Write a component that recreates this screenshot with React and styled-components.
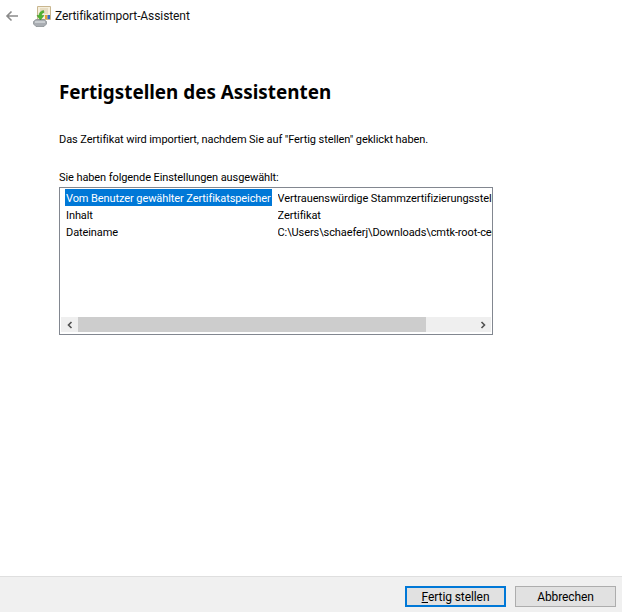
import React from "react";
import styled, { createGlobalStyle } from "styled-components";

const Global = createGlobalStyle`
  html, body { margin: 0; padding: 0; background: #fff; }
  * { box-sizing: border-box; }
`;
const Page = styled.div`
  width: 622px; height: 612px; display: flex; flex-direction: column; overflow: hidden;
  font-family: Roboto, "Noto Sans", sans-serif; font-size: 11px; letter-spacing: -0.09px; color: #000; background: #fff;
`;
const Header = styled.header`
  height: 32px; display: flex; align-items: center; padding-left: 5px; flex: none;
`;
const BackIcon = styled.svg`width: 14px; height: 12px; flex: none; margin-bottom: 1px;`;
const AppIcon = styled.svg`width: 18px; height: 21px; margin-left: 14px; flex: none; margin-bottom: -1px;`;
const WindowTitle = styled.span`margin-left: 4px; color: #111; font-size: 12px;`;
const Content = styled.main`
  flex: 1; padding: 46px 0 0 59px; display: flex; flex-direction: column; align-items: flex-start;
`;
const Heading = styled.h1`
  margin: 0; font-family: "Noto Sans", sans-serif; font-size: 18.85px; letter-spacing: 0; line-height: 28px; font-weight: 700;
`;
const Text = styled.p`
  margin: ${p => p.$top}px 0 0 0; line-height: 16px; height: 16px; white-space: nowrap;
`;
const ListBox = styled.div`
  width: 434px; height: 148px; margin-top: 1px; border: 1px solid #828790; display: flex; flex-direction: column; padding: 1px 0 0 0;
`;
const Rows = styled.div`flex: 1; overflow: hidden;`;
const Row = styled.div`
  display: grid; grid-template-columns: 217.5px 1fr; height: 17px; line-height: 19px; white-space: nowrap; overflow: hidden;
`;
const Name = styled.div`
  margin-left: 5px; padding-left: 1px; background: ${p => p.$selected ? "#0078d7" : "transparent"};
  color: ${p => p.$selected ? "#fff" : "#000"}; width: 207px; overflow: hidden;
`;
const Value = styled.div`overflow: hidden;`;
const Scrollbar = styled.div`
  height: 15px; margin: 0 1px 2px 1px; background: #efefef; display: flex; align-items: stretch; flex: none;
`;
const ScrollButton = styled.div`
  width: 17px; display: flex; align-items: center; justify-content: center; flex: none;
`;
const Thumb = styled.div`width: 348px; background: #cdcdcd;`;
const Track = styled.div`flex: 1;`;
const Chevron = styled.svg`width: 8px; height: 8px;`;
const Footer = styled.footer`
  height: 36px; flex: none; background: #f0f0f0; border-top: 1px solid #dfdfdf;
  display: flex; justify-content: flex-end; align-items: flex-start; gap: 9px; padding: 9px 6px 0 0;
`;
const Button = styled.button`
  width: 101px; height: 21px; padding: 0; background: #e1e1e1; color: #000;
  font: inherit; letter-spacing: inherit; font-size: 12px; line-height: 16px;
  border: ${p => p.$primary ? "2px solid #0078d7" : "1px solid #adadad"};
`;

export default function App() {
  return (
    <Page>
      <Global />
      <Header>
        <BackIcon viewBox="0 0 14 12">
          <path d="M13 6H2.5M6.5 1.5 2 6l4.5 4.5" fill="none" stroke="#8a8a8a" strokeWidth="1.6" />
        </BackIcon>
        <AppIcon viewBox="0 0 18 21">
          <path d="M4.5 .5h13v13h-13z" fill="#f6efdc" stroke="#c9b68f" strokeWidth="1" />
          <path d="M7 3h8M7 5h8M11 7h4" stroke="#d8c9a8" strokeWidth="1" />
          <rect x="12" y="9" width="2.5" height="4" fill="#e8a030" />
          <rect x="14.5" y="9" width="2.5" height="4" fill="#3b6fc4" />
          <path d="M.5 15.5 3 13.5h8l2.5 2v2.5L11 20.5H3L.5 18z" fill="#a9adb2" stroke="#83888d" strokeWidth=".7" />
          <path d="M2 16h10" stroke="#e2e4e6" strokeWidth="1.2" />
          <path d="M10.5 4.5C7.5 5 6 7 6 9.5H4l3.4 4.5 3.6-4.5H8.6c0-1.6.8-2.6 2.4-3z" fill="#4fb52f" stroke="#35901f" strokeWidth=".5" />
        </AppIcon>
        <WindowTitle>Zertifikatimport-Assistent</WindowTitle>
      </Header>
      <Content>
        <Heading>Fertigstellen des Assistenten</Heading>
        <Text $top={26}>Das Zertifikat wird importiert, nachdem Sie auf "Fertig stellen" geklickt haben.</Text>
        <Text $top={22}>Sie haben folgende Einstellungen ausgewählt:</Text>
        <ListBox>
          <Rows>
            <Row><Name $selected>Vom Benutzer gewählter Zertifikatspeicher</Name><Value>Vertrauenswürdige Stammzertifizierungsstellen</Value></Row>
            <Row><Name>Inhalt</Name><Value>Zertifikat</Value></Row>
            <Row><Name>Dateiname</Name><Value>C:\Users\schaeferj\Downloads\cmtk-root-cert.cer</Value></Row>
          </Rows>
          <Scrollbar>
            <ScrollButton>
              <Chevron viewBox="0 0 8 8"><path d="M5.5 1 2.5 4l3 3" fill="none" stroke="#505050" strokeWidth="1.6" /></Chevron>
            </ScrollButton>
            <Thumb />
            <Track />
            <ScrollButton>
              <Chevron viewBox="0 0 8 8"><path d="M2.5 1l3 3-3 3" fill="none" stroke="#505050" strokeWidth="1.6" /></Chevron>
            </ScrollButton>
          </Scrollbar>
        </ListBox>
      </Content>
      <Footer>
        <Button $primary><u>F</u>ertig stellen</Button>
        <Button>Abbrechen</Button>
      </Footer>
    </Page>
  );
}
